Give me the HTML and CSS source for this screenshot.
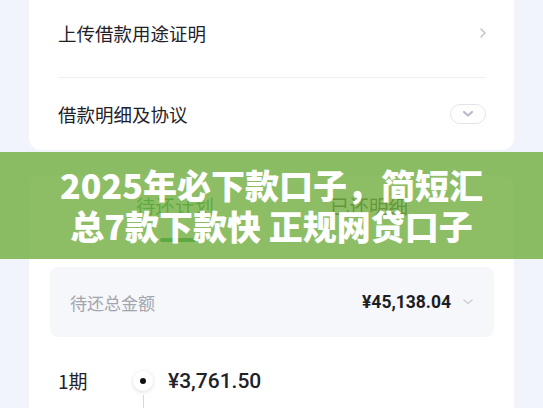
FILE: index.html
```html
<!DOCTYPE html>
<html lang="zh-CN">
  <head>
    <meta charset="UTF-8" />
    <meta name="viewport" content="width=device-width, initial-scale=1.0" />
    <title>借款详情</title>
    <link rel="stylesheet" href="styles.css">
  </head>
  <body>
    <div class="page">
      <div class="card card-top">
        <div class="row row-first">
          <span class="row-title">上传借款用途证明</span>
          <svg class="chevron-right" width="8" height="12" viewBox="0 0 8 12">
            <path d="M2 2 L6 6 L2 10" fill="none" stroke="#c3c6d2" stroke-width="1.6" stroke-linecap="round" stroke-linejoin="round" />
          </svg>
        </div>
        <div class="row">
          <span class="row-title">借款明细及协议</span>
          <span class="pill">
            <svg width="12" height="8" viewBox="0 0 12 8">
              <path d="M2 2 L6 5.5 L10 2" fill="none" stroke="#b4b8c8" stroke-width="2.2" stroke-linecap="round" stroke-linejoin="round" />
            </svg>
          </span>
        </div>
      </div>

      <div class="card card-plan">
        <div class="tabs">
          <div class="tab active">
            <span>待还计划</span>
            <i class="tab-bar"></i>
          </div>
          <div class="tab">
            <span>已还明细</span>
          </div>
        </div>

        <div class="total">
          <span class="total-label">待还总金额</span>
          <span class="total-value">
            ¥45,138.04
            <svg width="10" height="6" viewBox="0 0 10 6">
              <path d="M1 1 L5 4.5 L9 1" fill="none" stroke="#c9ccd6" stroke-width="1.3" stroke-linecap="round" stroke-linejoin="round" />
            </svg>
          </span>
        </div>

        <div class="term">
          <div class="term-main">
            <span class="term-name">1期</span>
            <span class="marker"><i></i></span>
            <span class="term-amount">¥3,761.50</span>
          </div>
          <div class="term-sub">
            <span class="term-date">2024/03/28</span>
            <span class="line-col"><i></i></span>
            <span class="term-detail">本金 ¥3,125.00 利息 ¥636.50</span>
          </div>
        </div>
      </div>
    </div>

    <div class="banner">
      2025年必下款口子，简短汇<br />总7款下款快 正规网贷口子
    </div>
  </body>
</html>
```

FILE: styles.css
```css
* {
  box-sizing: border-box;
  margin: 0;
  padding: 0;
}

body {
  background: #f1f4fb;
  font-family: "Noto Sans CJK SC", "Noto Sans", sans-serif;
  color: #1f2229;
  height: 408px;
  overflow: hidden;
}

.page {
  padding: 0 29px;
}

.card {
  background: #fff;
  border-radius: 12px;
}

.card-top {
  border-radius: 0 0 12px 12px;
  padding: 0 28px 0 29px;
}

.row {
  display: flex;
  align-items: center;
  justify-content: space-between;
  height: 72px;
}

.row-first {
  height: 78px;
  padding-bottom: 12px;
  border-bottom: 1px solid #eef0f4;
}

.row-title {
  font-size: 18.5px;
  line-height: 26px;
}

.chevron-right {
  margin-right: -1px;
}

.pill {
  display: flex;
  align-items: center;
  justify-content: center;
  width: 36px;
  height: 20px;
  border: 1px solid #e2e4ec;
  border-radius: 10px;
}

.card-plan {
  margin-top: 25px;
  padding: 0 20px 0 21px;
  height: 260px;
}

.tabs {
  display: flex;
  justify-content: center;
  gap: 116px;
  padding-top: 17px;
  height: 92px;
}

.tab {
  display: flex;
  flex-direction: column;
  align-items: center;
  width: 78px;
  font-size: 19.5px;
  line-height: 28px;
  color: #333;
}

.tab.active {
  color: #109a52;
}

.tab-bar {
  width: 36px;
  height: 4px;
  border-radius: 2px;
  background: #109a52;
  margin-top: 18px;
  margin-left: 6px;
}

.total {
  display: flex;
  align-items: center;
  justify-content: space-between;
  height: 70px;
  padding: 0 21px 0 20px;
  background: #f6f7fa;
  border-radius: 8px;
}

.total-label {
  font-size: 17px;
  color: #a3a5ad;
}

.total-value {
  display: flex;
  align-items: center;
  gap: 12px;
  font-family: Roboto, "Noto Sans", sans-serif;
  font-weight: 700;
  font-size: 17.5px;
  color: #1c1e24;
}

.term {
  margin-top: 30px;
  padding-left: 8px;
}

.term-main,
.term-sub {
  display: flex;
  align-items: center;
}

.term-name {
  width: 75px;
  font-size: 19px;
  line-height: 28px;
}

.marker {
  display: flex;
  align-items: center;
  justify-content: center;
  width: 20px;
  height: 20px;
  border-radius: 50%;
  background: #fff;
  box-shadow: 0 1px 4px rgba(40, 60, 110, 0.18);
}

.marker i {
  width: 6px;
  height: 6px;
  border-radius: 50%;
  background: #111;
}

.term-amount {
  margin-left: 15px;
  font-family: Roboto, "Noto Sans", sans-serif;
  font-weight: 500;
  font-size: 21px;
}

.term-sub {
  height: 40px;
  align-items: flex-end;
  font-size: 14px;
  color: #a5a8b0;
}

.term-date {
  width: 75px;
}

.line-col {
  display: flex;
  justify-content: center;
  width: 20px;
  align-self: stretch;
}

.line-col i {
  width: 1px;
  background: #d3d7e0;
}

.term-detail {
  margin-left: 15px;
}

.banner {
  position: absolute;
  top: 152px;
  left: 0;
  width: 100%;
  height: 107px;
  padding-top: 12px;
  background: rgba(112, 174, 62, 0.8);
  color: #fff;
  font-weight: 900;
  font-size: 34px;
  line-height: 41px;
  text-align: center;
  white-space: nowrap;
}
```
